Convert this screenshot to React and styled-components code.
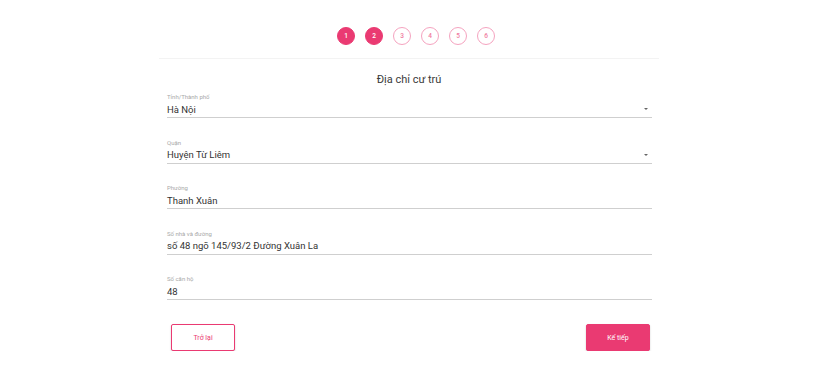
import React from "react";
import styled, { createGlobalStyle } from "styled-components";

const pink = "#ea3a72";

const GlobalStyle = createGlobalStyle`
  body {
    margin: 0;
    background: #ffffff;
    font-family: Roboto, "Liberation Sans", Arial, sans-serif;
  }
`;

const Page = styled.div`
  width: 500px;
  margin: 0 auto;
  padding-top: 27px;
`;

const Stepper = styled.div`
  display: flex;
  justify-content: center;
  gap: 10px;
  padding-left: 14px;
`;

const Step = styled.div`
  width: 18px;
  height: 18px;
  box-sizing: border-box;
  border-radius: 50%;
  display: flex;
  align-items: center;
  justify-content: center;
  font-size: 6.5px;
  font-weight: 500;
  color: ${(p) => (p.active ? "#ffffff" : "#f07aa0")};
  background: ${(p) => (p.active ? pink : "#ffffff")};
  border: 1.2px solid ${(p) => (p.active ? pink : "#f5a3bf")};
`;

const Divider = styled.div`
  margin-top: 13px;
  height: 1px;
  background: #f3f3f3;
`;

const Title = styled.div`
  margin-top: 14px;
  text-align: center;
  font-size: 11px;
  line-height: 14px;
  color: #3a3a3a;
`;

const Fields = styled.div`
  margin-top: 6px;
  padding: 0 7px 0 8px;
  display: flex;
  flex-direction: column;
  gap: 20.5px;
`;

const Field = styled.div`
  display: flex;
  flex-direction: column;
`;

const Label = styled.div`
  font-size: 6px;
  line-height: 8px;
  color: #a8a8a8;
`;

const ValueRow = styled.div`
  margin-top: 1.5px;
  padding-bottom: 1.5px;
  border-bottom: 1px solid #cfcfcf;
  display: flex;
  align-items: center;
  justify-content: space-between;
  font-size: 9.5px;
  line-height: 13px;
  color: #333333;
`;

const Caret = styled.span`
  width: 0;
  height: 0;
  margin-right: 4px;
  border-left: 2.5px solid transparent;
  border-right: 2.5px solid transparent;
  border-top: 2.5px solid #666666;
`;

const Actions = styled.div`
  margin-top: 24px;
  padding: 0 9px 0 12px;
  display: flex;
  justify-content: space-between;
`;

const Button = styled.button`
  width: 64px;
  height: 27px;
  box-sizing: border-box;
  border-radius: 2px;
  font-family: inherit;
  font-size: 7px;
  cursor: pointer;
  border: 1.5px solid ${pink};
  color: ${(p) => (p.primary ? "#ffffff" : pink)};
  background: ${(p) => (p.primary ? pink : "#ffffff")};
  box-shadow: 0 1px 2px rgba(0, 0, 0, 0.2);
`;

const fields = [
  { label: "Tỉnh/Thành phố", value: "Hà Nội", select: true },
  { label: "Quận", value: "Huyện Từ Liêm", select: true },
  { label: "Phường", value: "Thanh Xuân" },
  { label: "Số nhà và đường", value: "số 48 ngõ 145/93/2 Đường Xuân La" },
  { label: "Số căn hộ", value: "48" },
];

export default function App() {
  return (
    <>
      <GlobalStyle />
      <Page>
        <Stepper>
          {[1, 2, 3, 4, 5, 6].map((n) => (
            <Step key={n} active={n <= 2}>
              {n}
            </Step>
          ))}
        </Stepper>
        <Divider />
        <Title>Địa chỉ cư trú</Title>
        <Fields>
          {fields.map((f) => (
            <Field key={f.label}>
              <Label>{f.label}</Label>
              <ValueRow>
                <span>{f.value}</span>
                {f.select && <Caret />}
              </ValueRow>
            </Field>
          ))}
        </Fields>
        <Actions>
          <Button>Trở lại</Button>
          <Button primary>Kế tiếp</Button>
        </Actions>
      </Page>
    </>
  );
}
